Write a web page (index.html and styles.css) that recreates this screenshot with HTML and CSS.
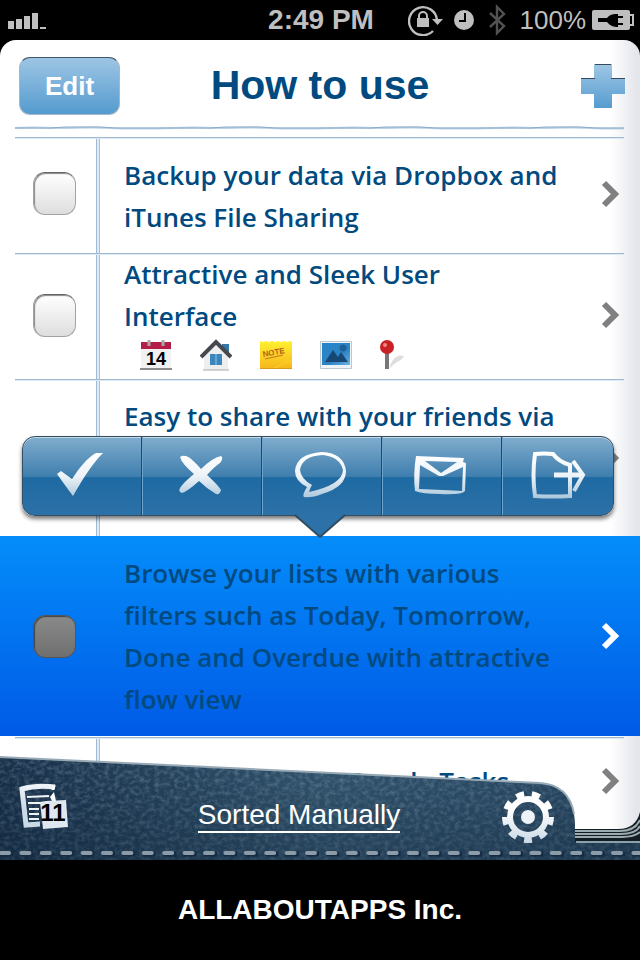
FILE: index.html
```html
<!DOCTYPE html>
<html lang="en">
<head>
<meta charset="utf-8">
<meta name="viewport" content="width=device-width, initial-scale=1">
<title>How to use</title>
<link rel="stylesheet" href="styles.css">
</head>
<body>
<svg class="defs" aria-hidden="true">
  <defs>
    <linearGradient id="silver" gradientUnits="userSpaceOnUse" x1="0" y1="8" x2="0" y2="54"><stop offset="0" stop-color="#fff"/><stop offset=".5" stop-color="#edf3f8"/><stop offset="1" stop-color="#a9c5da"/></linearGradient>
    <linearGradient id="pale" gradientUnits="userSpaceOnUse" x1="0" y1="-26" x2="0" y2="48"><stop offset=".25" stop-color="#fff"/><stop offset=".7" stop-color="#c9d9e6"/></linearGradient>
    <linearGradient id="sky" x1="0" y1="0" x2="0" y2="1"><stop offset="0" stop-color="#9fc7e5"/><stop offset="1" stop-color="#559cd0"/></linearGradient>
    <linearGradient id="yellow" x1="0" y1="0" x2="0" y2="1"><stop offset="0" stop-color="#fff12f"/><stop offset="1" stop-color="#f6b51b"/></linearGradient>
    <linearGradient id="photo" x1="0" y1="0" x2="1" y2="1"><stop offset="0" stop-color="#2685c9"/><stop offset=".6" stop-color="#2c83c3"/><stop offset="1" stop-color="#6cb4e2"/></linearGradient>
    <linearGradient id="denim" x1="0" y1="0" x2="1" y2="0"><stop offset="0" stop-color="#19304a"/><stop offset=".25" stop-color="#26435d"/><stop offset=".5" stop-color="#33556f"/><stop offset=".8" stop-color="#2d4d68"/><stop offset="1" stop-color="#25435c"/></linearGradient>
    <linearGradient id="shade" x1="0" y1="0" x2="0" y2="1"><stop offset="0" stop-color="#0c2236" stop-opacity="0"/><stop offset="1" stop-color="#0c2236" stop-opacity=".4"/></linearGradient>
    <filter id="weave" x="0" y="0" width="100%" height="100%"><feTurbulence type="fractalNoise" baseFrequency=".2 .24" numOctaves="3" seed="8"/><feColorMatrix values="0 0 0 0 .45  0 0 0 0 .62  0 0 0 0 .72  1.8 0 0 0 -.7"/><feComposite in2="SourceGraphic" operator="in"/></filter>
    <pattern id="wave" width="160" height="4" patternUnits="userSpaceOnUse"><path d="M0 2C20 1 28 2 45 2S75 1 95 2S125 3 160 2" fill="none" stroke="#bdd1e6" stroke-width="2"/><path d="M0 2H35L50 1H85L100 2H160" fill="none" stroke="#8babc9"/></pattern>
    <symbol id="chevron" viewBox="0 0 20 28"><path d="M3 3l11 11L3 25"/></symbol>
  </defs>
</svg>
<div class="phone">
  <header class="status">
    <svg class="signal" width="40" height="20" viewBox="0 0 40 20" fill="#bfbfbf" aria-label="Signal"><path d="M0 11h6v8H0zM8 9h6v10H8zM16 6h6v13h-6zM24 3h6v16h-6zM32 17h6v2h-6z"/></svg>
    <time class="clock">2:49 PM</time>
    <div class="indicators">
      <svg width="36" height="32" viewBox="0 0 36 32"><path d="M25 27A14 14 0 1 1 29 16" fill="none" stroke="#bfbfbf" stroke-width="2.4"/><path d="M24 15h11l-5.500 6z" fill="#bfbfbf"/><path d="M9 14h12v9H9z" fill="#bfbfbf"/><path d="M11 15v-3a4 4 0 0 1 8 0v3" fill="none" stroke="#bfbfbf" stroke-width="2"/></svg>
      <svg class="alarm" width="20" height="20" viewBox="0 0 20 20"><circle cx="10" cy="10" r="10" fill="#bfbfbf"/><path d="M11 3v8H5" fill="none" stroke="#000" stroke-width="2"/></svg>
      <svg class="bluetooth" width="18" height="32" viewBox="0 0 18 32"><path d="M2 9l14 13-7 7V3l7 7L2 23" fill="none" stroke="#515151" stroke-width="2.400"/></svg>
      <span class="percent">100%</span>
      <svg width="42" height="20" viewBox="0 0 42 20"><rect width="38" height="20" rx="2" fill="#bfbfbf"/><path d="M38 5h3v10h-3" fill="none" stroke="#bfbfbf" stroke-width="2"/><path d="M6 8h9c3-4 7-4 11-4v2h5v2h-5v5h5v2h-5v2c-4 0-8-1-11-5H6z" fill="#000"/></svg>
    </div>
  </header>

  <main class="sheet">
    <div class="titlebar">
      <button class="edit" type="button">Edit</button>
      <h1>How to use</h1>
      <button class="plain add" type="button" aria-label="Add item"><svg width="44" height="44" viewBox="0 0 44 44"><path d="M13 0h18v14h13v16H31v14H13V30H0V14h13z" fill="url(#sky)"/><path d="M14 .5h16M0 14.500h14M30 14.500h14" stroke="#38495a"/></svg></button>
    </div>
    <svg class="rule" height="4"><rect width="100%" height="4" fill="url(#wave)"/></svg>
    <ul class="list">
      <li class="row first">
        <label class="tick"><input type="checkbox" aria-label="Backup your data"></label>
        <p class="text">Backup your data via Dropbox and<br>iTunes File Sharing</p>
        <svg class="chev" width="20" height="28"><use href="#chevron"/></svg>
      </li>
      <li class="row second">
        <label class="tick"><input type="checkbox" aria-label="Attractive interface"></label>
        <div class="text"><p>Attractive and Sleek User<br>Interface</p>
          <div class="tags">
            <svg width="32" height="32" viewBox="0 0 32 32"><path d="M1 3h30v26H1z" fill="#f1f1f1"/><path d="M1 3h30v7H1z" fill="#b31f48"/><path d="M0 29h32v2H0z" fill="#8c8c8c"/><path d="M9 1v6M23 1v6" stroke="#aaa" stroke-width="3"/><text x="16" y="26" class="day">14</text></svg>
            <svg width="32" height="32" viewBox="0 0 32 32"><path d="M22 5h7v10h-7z" fill="#3577a8"/><path d="M4 17L16 5l12 12v14H4z" fill="#eee"/><path d="M3 31h26" stroke="#aaa"/><path d="M1 18L16 3l15 15" fill="none" stroke="#45494d" stroke-width="4"/><path d="M10 15h12v11H10z" fill="#3a86bd"/><path d="M16 15v11" stroke="#92c4e2"/></svg>
            <svg width="32" height="32" viewBox="0 0 32 32"><path d="M0 2l3 1 3-1 3 1 3-1 3 1 3-1 3 1 3-1 3 1 3-1 2 1v27H0z" fill="url(#yellow)"/><path d="M14 29l18-8M25 22l7-5" stroke="#fbd02a"/><path d="M0 29.500h32" stroke="#d89a1d"/><text x="3" y="16" class="note" transform="rotate(-10 14 16)">NOTE</text><path d="M5 20l18-4" stroke="#c47421"/></svg>
            <svg width="32" height="32" viewBox="0 0 32 32"><path d="M.5 2.500h31v27H.5z" fill="#edf3f7" stroke="#bbc8d1"/><path d="M2 4h28v22H2z" fill="url(#photo)"/><path d="M5 23l8-12 5 7 3-5 7 10z" fill="#174875"/><circle cx="23" cy="9" r="3" fill="#206298" stroke="#174875" stroke-dasharray="1 1"/></svg>
            <svg width="32" height="32" viewBox="0 0 32 32"><path d="M10 27c3-9 9-12 14-10-2 5-8 5-14 12z" fill="#ddd"/><path d="M7 12v18" stroke="#777" stroke-width="4"/><circle cx="7" cy="8" r="7" fill="#c92126"/><circle cx="5" cy="6" r="2" fill="#f48880"/></svg>
          </div>
        </div>
        <svg class="chev" width="20" height="28"><use href="#chevron"/></svg>
      </li>
      <li class="row third">
        <label class="tick"><input type="checkbox" aria-label="Easy to share"></label>
        <p class="text">Easy to share with your friends via</p>
        <svg class="chev" width="20" height="28"><use href="#chevron"/></svg>
        <div class="popover" role="toolbar" aria-label="Item actions">
          <button type="button" aria-label="Done"><svg width="60" height="60" viewBox="0 0 60 60"><path d="M7 29l4-3 11 8C30 22 37 13 46 8h7C41 20 33 34 23 51Q17 43 7 29z" fill="url(#silver)"/></svg></button>
          <button type="button" aria-label="Delete"><svg width="60" height="60" viewBox="0 0 60 60"><path d="M10 12Q14 9 20 13Q27 19 31 24Q42 13 51 11Q54 13 50 18Q44 22 37 30Q48 40 51 45Q50 50 46 49Q36 43 29 36Q18 46 12 48Q8 47 10 43Q14 37 24 29Q12 19 10 12z" fill="url(#silver)"/></svg></button>
          <button type="button" aria-label="Comment"><svg width="60" height="60" viewBox="0 0 60 60"><path fill-rule="evenodd" d="M14 52Q12 50 17 42Q5 36 5 26Q6 9 32 7Q54 8 56 26Q56 42 32 49Q22 53 14 52zM19 47Q34 44 44 38Q53 32 53 25Q50 12 33 10Q12 11 10 25Q11 34 22 40Q20 43 19 47z" fill="url(#silver)"/></svg></button>
          <button type="button" aria-label="Mail"><svg width="60" height="60" viewBox="0 0 60 60"><path fill-rule="evenodd" d="M6 11L54 13L53 17L56 18L55 46Q52 50 30 49Q12 49 5 46Q3 30 6 11zM10 20L9 44Q34 45 52 46L53 22L33 31Q31 31 29 31zM15 16L31 28L47 17z" fill="url(#silver)"/></svg></button>
          <button type="button" aria-label="Export"><svg width="60" height="60" viewBox="0 0 60 60" fill="none" stroke="url(#silver)" stroke-width="4"><path d="M7 9Q16 8 25 9Q31 17 42 20V51Q24 52 7 51Q4 30 7 9z"/><path d="M26 30.100L55 30" stroke-width="5"/><path d="M45 16L55 30L46 46"/></svg></button>
          <svg class="pointer" width="52" height="26" viewBox="0 0 52 26"><path d="M1 0L26 23L51 0z" fill="#2c71a7"/><path d="M1 1l25 22L51 1" fill="none" stroke="#304b60" stroke-width="2"/></svg>
        </div>
      </li>
      <li class="row selected">
        <label class="tick"><input type="checkbox" aria-label="Browse your lists"></label>
        <p class="text">Browse your lists with various<br>filters such as Today, Tomorrow,<br>Done and Overdue with attractive<br>flow view</p>
        <svg class="chev" width="20" height="28"><use href="#chevron"/></svg>
      </li>
      <li class="row last">
        <span class="tick"></span>
        <p class="text">Synchronize with Google Tasks</p>
        <svg class="chev" width="20" height="28"><use href="#chevron"/></svg>
      </li>
    </ul>
  </main>

  <nav class="pocket">
    <svg class="cloth" viewBox="0 0 640 106" preserveAspectRatio="none" aria-hidden="true">
      <path d="M574 75H618Q636 75 640 58V106H574z" fill="#141d24"/>
      <path d="M574 77H620Q635 77 640 66M574 80H621Q636 80 640 72M574 83H622Q635 83 640 78" fill="none" stroke="#9cabb0" stroke-width="2"/>
      <path d="M0 3L540 29Q573 31 575 69V88H640V106H0z" fill="url(#denim)"/>
      <path d="M0 3L540 29Q573 31 575 69V88H640V106H0z" fill="#fff" filter="url(#weave)" opacity=".35"/>
      <path d="M0 3L540 29Q573 31 575 69V88H640V106H0z" fill="url(#shade)"/>
      <path d="M0 3L540 29Q569 31 574 60" fill="none" stroke="#97a9b5" stroke-width="2"/>
      <path d="M576 88H640" stroke="#8ba0ad" stroke-width="2"/>
      <path d="M0 100H640" stroke="#142b41" stroke-width="5" stroke-dasharray="13 7.400"/>
      <path d="M1 99H640" stroke="#8b9ca8" stroke-width="4" stroke-linecap="round" stroke-dasharray="8 12.400"/>
    </svg>
    <button class="plain" type="button" aria-label="Lists"><svg width="52" height="48" viewBox="0 0 52 48"><path d="M37 4Q18 2 4 6L8 42L22 41" fill="none" stroke="url(#pale)" stroke-width="5"/><path d="M33 7l5-5-2 5zM36 9l2 9h-4l-2-4z" fill="#fff"/><path d="M9 14l22-1M10 20h17M11 26h10M11 31h10M11 36h10" stroke="#eef3f6" stroke-width="2"/><path d="M22 19l6-1 20-1 2 27-25 2z" fill="#dfe8ee"/><text x="35" y="38" class="eleven">11</text></svg></button>
    <button class="sort" type="button">Sorted Manually</button>
    <button class="plain gear" type="button" aria-label="Settings"><svg width="56" height="54" viewBox="-28 -27 56 54"><g fill="none" stroke="url(#pale)"><circle r="18" stroke-width="6"/><circle r="22" stroke-width="8" pathLength="18" stroke-dasharray="1 1"/></g><circle r="7" fill="#edf3f7"/></svg></button>
  </nav>
  <footer class="company">ALLABOUTAPPS Inc.</footer>
</div>
</body>
</html>
```
FILE: styles.css
```css
* { box-sizing: border-box; }

body {
  margin: 0;
  background: #000;
  font-family: "Liberation Sans", Arial, sans-serif;
}

button { font-family: inherit; cursor: pointer; }
p, h1, ul { margin: 0; padding: 0; }
svg { display: block; flex: none; }
.defs { position: absolute; width: 0; height: 0; }

.phone {
  min-height: 100vh;
  display: flex;
  flex-direction: column;
}

.status {
  height: 40px;
  padding: 0 6px 0 8px;
  display: grid;
  grid-template-columns: 1fr auto 1fr;
  align-items: center;
  color: #bfbfbf;
  font-size: 28px;
  font-weight: bold;
}

.indicators {
  display: flex;
  justify-content: flex-end;
  align-items: center;
}

.alarm { margin: 0 14px 0 10px; }
.bluetooth { margin-right: 14px; }
.percent { font-size: 26px; font-weight: normal; margin-right: 6px; }

.sheet {
  background: linear-gradient(90deg, #fff calc(100% - 30px), #f1f2f5 calc(100% - 16px), #e4e6ec calc(100% - 4px));
  border-radius: 16px;
}

.titlebar {
  height: 86px;
  padding: 6px 15px 0 19px;
  display: grid;
  grid-template-columns: 1fr auto 1fr;
  align-items: center;
}

.add { justify-self: end; }

h1 {
  padding: 0 4px 2px 0;
  color: #004a80;
  font-size: 41px;
  line-height: 48px;
}

.edit {
  width: 101px;
  height: 58px;
  border: 1px solid #a3b8c9;
  border-top: 1px solid #3f5568;
  border-radius: 11px;
  background: linear-gradient(#9dc5e4, #549bcf);
  color: #fff;
  font-size: 26px;
  font-weight: bold;
}

.plain { border: 0; padding: 0; background: none; }

.rule { display: block; width: calc(100% - 31px); margin: 0 16px 7px 15px; }

.list { list-style: none; }

.row {
  position: relative;
  display: flex;
  align-items: center;
  padding-right: 19px;
  background:
    linear-gradient(#9db9d4 1px, #dfe9f2 1px) 15px 0 / calc(100% - 31px) 2px no-repeat,
    linear-gradient(90deg, #9fbbd5 1px, #e0eaf3 1px 3px, #a9c2da 3px) 96px 0 / 4px 100% no-repeat;
}

.first { height: 116px; padding-bottom: 3px; }
.second { height: 126px; padding-bottom: 2px; }
.third { height: 157px; }
.selected { height: 201px; padding-bottom: 1px; background: linear-gradient(#048dfa, #005ae6) 0 0 / 100% 200px no-repeat; }
.last { height: 92px; padding-bottom: 4px; }

.tick {
  width: 109px;
  display: flex;
  justify-content: center;
  flex: none;
}

.tick input {
  appearance: none;
  margin: 0;
  width: 43px;
  height: 43px;
  border: 1px solid #a2a2a2;
  border-top-color: #666;
  border-radius: 12px;
  background: linear-gradient(#fff, #dedede);
  box-shadow: inset 1px 1px 1px #888;
}

.text {
  width: 464px;
  margin-left: 15px;
  color: #004a80;
  font-family: Chalkboard, "Open Sans", sans-serif;
  font-size: 26px;
  font-weight: 600;
  line-height: 42px;
}

.first .text { margin-top: 4px; }
.second .text { align-self: flex-start; }
.third .text { align-self: flex-start; margin-top: 16px; }

.selected input {
  border-color: #555;
  background: linear-gradient(#8a8a8a, #6f6f6f);
  box-shadow: inset 1px 1px 1px #444;
}

.tags { display: flex; gap: 28px; padding: 2px 0 0 16px; }
.day { font: bold 18px "Liberation Sans", sans-serif; text-anchor: middle; }
.note { font: bold 8px "Liberation Sans", sans-serif; fill: #b76018; }

.chev { margin-left: auto; fill: none; stroke: #808080; stroke-width: 6; }
.selected .chev { stroke: #fff; }

.popover {
  position: absolute;
  z-index: 1;
  top: 57px;
  left: 22px;
  right: 26px;
  height: 80px;
  display: grid;
  grid-template-columns: 118px repeat(3, 120px) 1fr;
  border: 1px solid #344e63;
  border-radius: 13px;
  background: linear-gradient(#81adcd, #3e7eae 51%, #1e6aa2 52%, #2c71a7);
  box-shadow: inset 0 1px #c2d8e8, 0 3px 4px #0008;
}

.popover button {
  border: 0;
  border-left: 1px solid #1b4b70;
  box-shadow: inset 1px 0 #6ea2c9;
  background: none;
  padding: 0 4px 2px 0;
  display: grid;
  place-items: center;
}

.popover button:first-child { border-left: 0; box-shadow: none; }
.popover button:nth-child(5) { padding-right: 0; }
.pointer { position: absolute; top: 77px; left: calc(50% + 2px); margin-left: -26px; }

.pocket {
  position: relative;
  z-index: 2;
  height: 106px;
  margin-top: -75px;
  padding: 0 84px 0 18px;
  display: grid;
  grid-template-columns: 52px 1fr 56px;
  align-items: center;
}

.cloth { position: absolute; inset: 0; width: 100%; height: 100%; z-index: -1; }
.eleven { font: bold 24px "Liberation Sans", sans-serif; text-anchor: middle; }

.sort {
  justify-self: center;
  margin: 18px 0 0 28px;
  padding: 0;
  border: 0;
  border-bottom: 2px solid #fff;
  background: none;
  color: #fff;
  font-size: 28px;
  line-height: 32px;
}

.gear { margin-top: 20px; }

.company {
  flex: 1;
  min-height: 100px;
  display: grid;
  place-items: center;
  background: #000;
  color: #fff;
  font-size: 28px;
  font-weight: bold;
}
```
